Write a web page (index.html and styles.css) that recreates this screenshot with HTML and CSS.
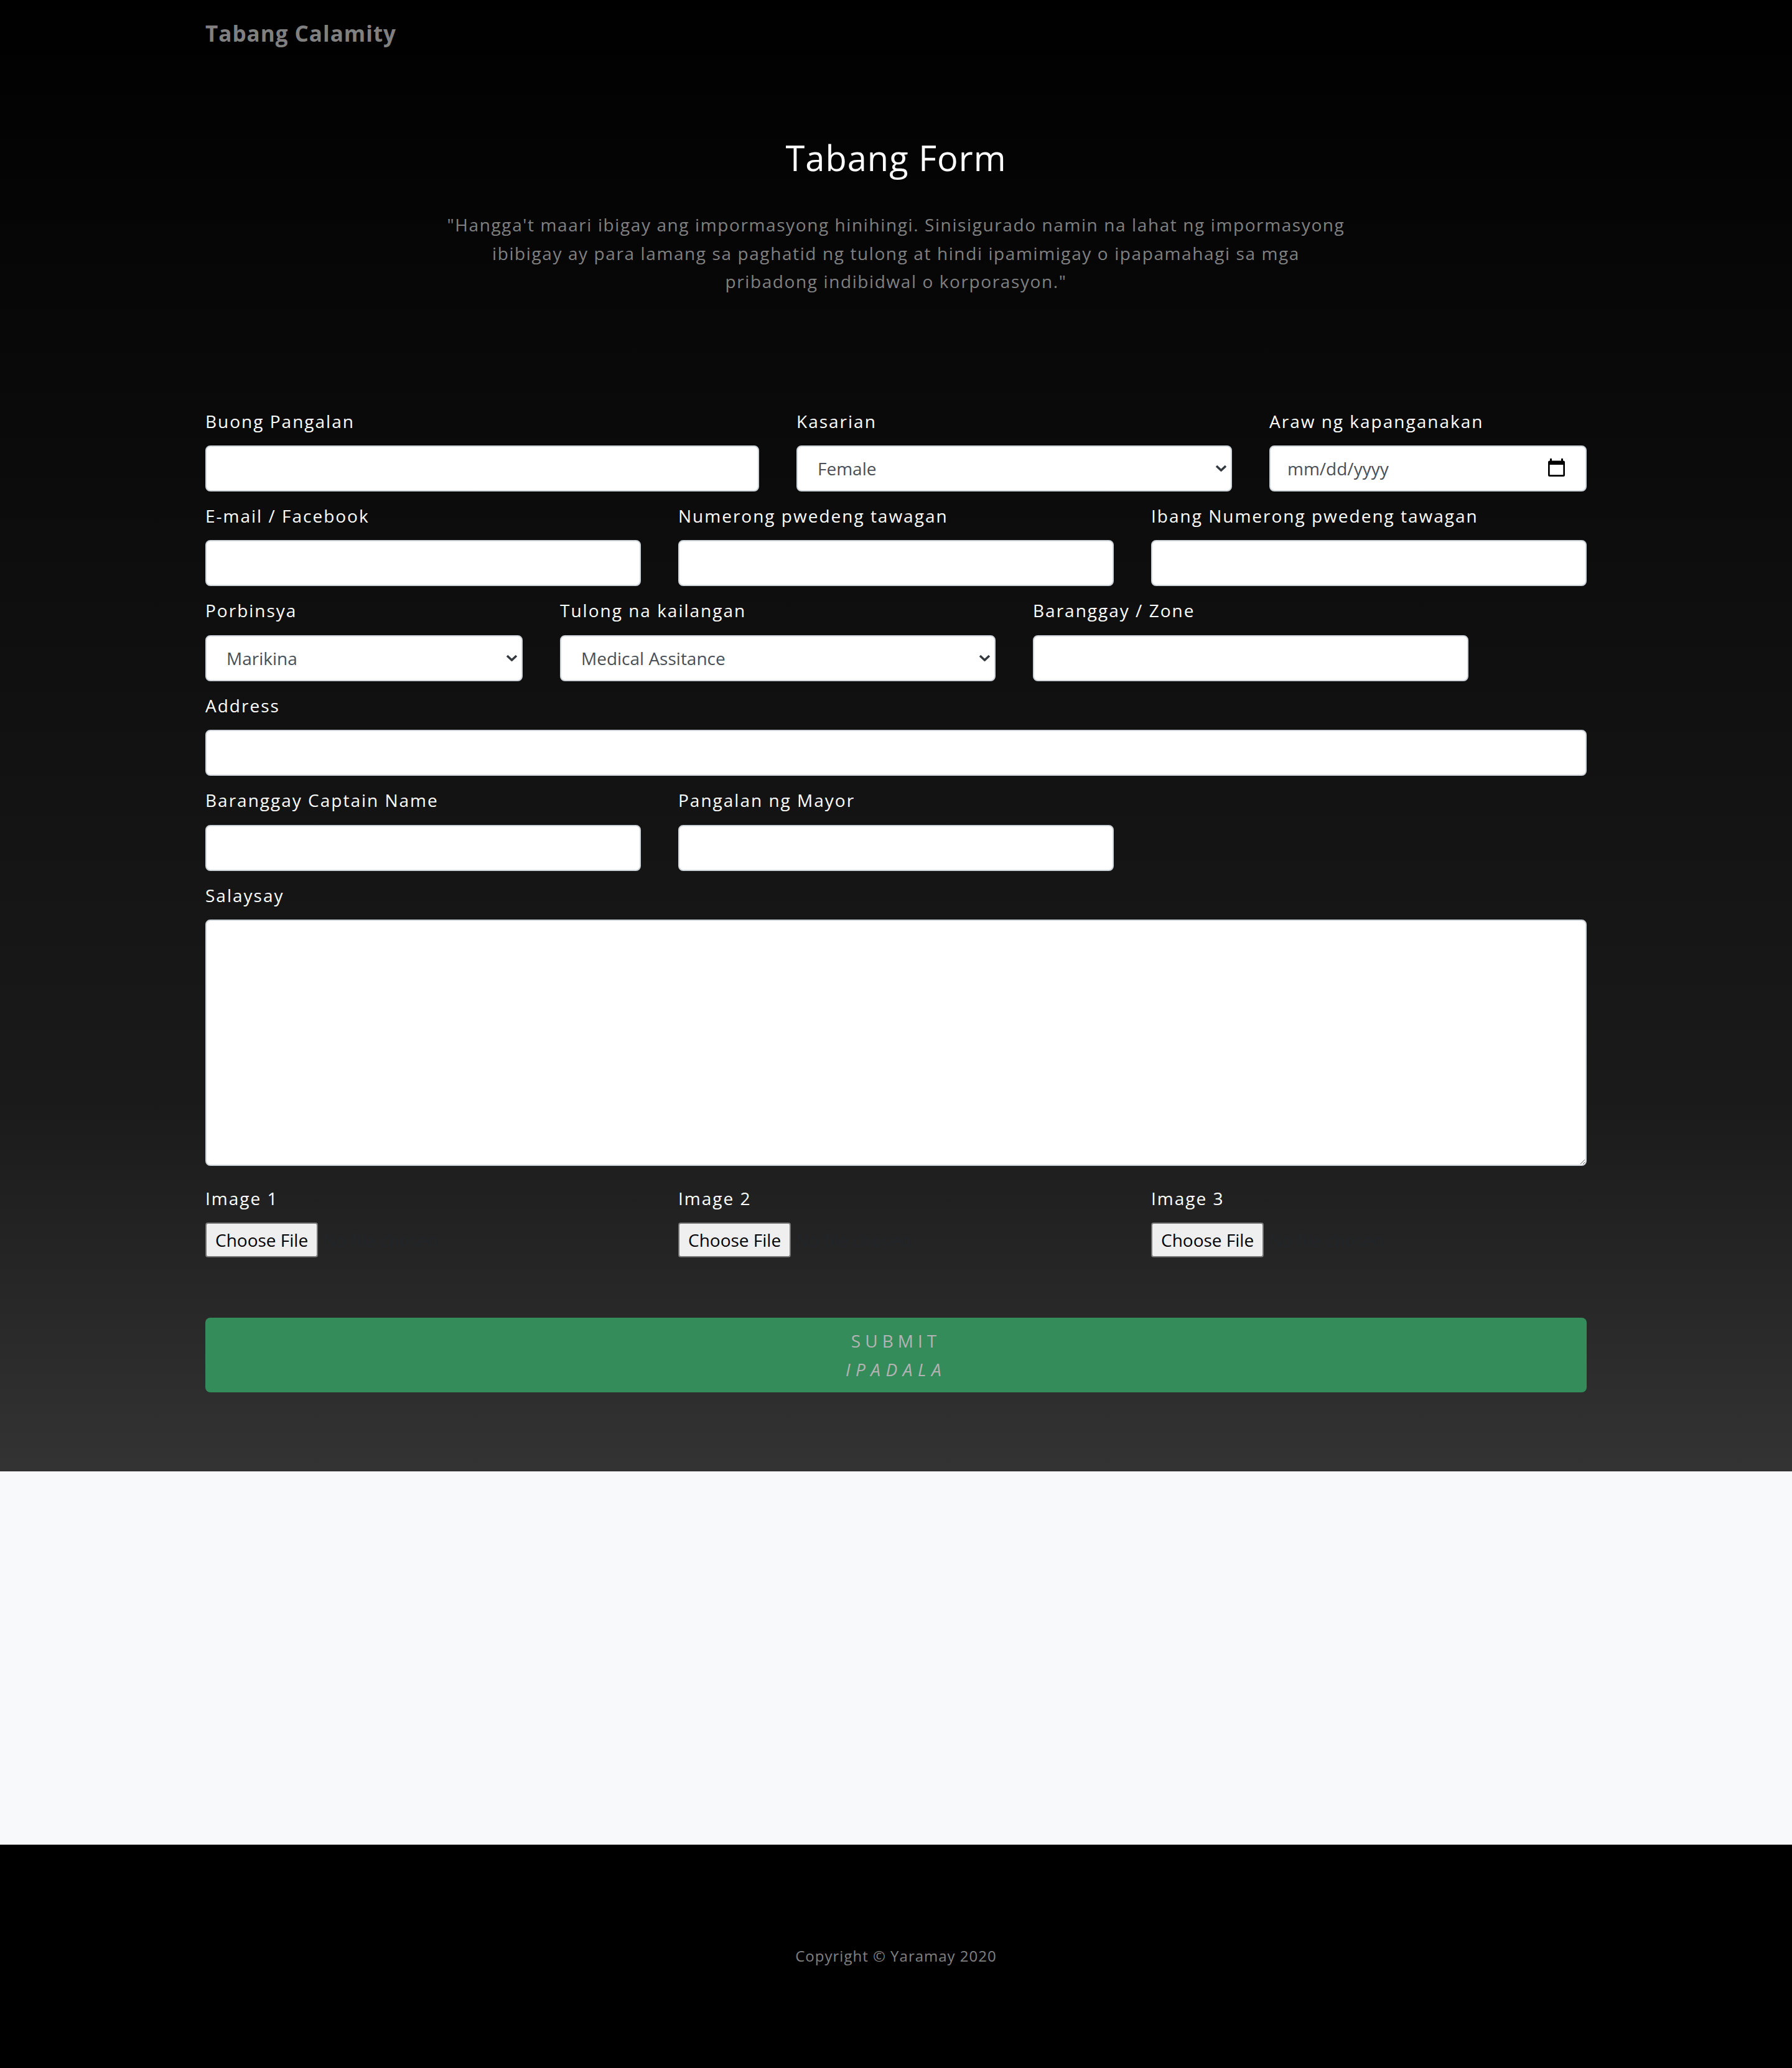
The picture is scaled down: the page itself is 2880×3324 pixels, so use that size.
FILE: index.html
```html
<!DOCTYPE html>
<html lang="tl">
<head>
<meta charset="utf-8">
<title>Tabang Calamity</title>
<link rel="stylesheet" href="styles.css">
</head>
<body>
<div class="hero">
  <nav class="navbar">
    <div class="container">
      <a class="brand" href="#">Tabang Calamity</a>
    </div>
  </nav>
  <header class="intro">
    <div class="container">
      <h2 class="title">Tabang Form</h2>
      <p class="lead">"Hangga't maari ibigay ang impormasyong hinihingi. Sinisigurado namin na lahat ng impormasyong<br>ibibigay ay para lamang sa paghatid ng tulong at hindi ipamimigay o ipapamahagi sa mga<br>pribadong indibidwal o korporasyon."</p>
    </div>
  </header>
  <section class="form-section">
    <div class="container">
      <form class="form-grid">
        <div class="field span-5">
          <label class="label" for="f-name">Buong Pangalan</label>
          <input class="control" id="f-name" type="text">
        </div>
        <div class="field span-4">
          <label class="label" for="f-sex">Kasarian</label>
          <div class="select-wrap">
            <select class="control select" id="f-sex"><option>Female</option><option>Male</option></select>
            <svg class="chevron" width="19" height="11" viewBox="0 0 19 11"><path d="M2 2 L9.5 9 L17 2" fill="none" stroke="#343a40" stroke-width="3.6"/></svg>
          </div>
        </div>
        <div class="field span-3">
          <label class="label" for="f-bday">Araw ng kapanganakan</label>
          <div class="date-wrap">
            <input class="control date" id="f-bday" type="text" placeholder="mm/dd/yyyy">
            <svg class="calendar" width="27" height="29" viewBox="0 0 27 29"><rect x="3" y="0" width="3" height="5" fill="#000"/><rect x="21" y="0" width="3" height="5" fill="#000"/><path fill="#000" fill-rule="evenodd" d="M2.5 3.5 H24.5 A2.5 2.5 0 0 1 27 6 V26.5 A2.5 2.5 0 0 1 24.5 29 H2.5 A2.5 2.5 0 0 1 0 26.5 V6 A2.5 2.5 0 0 1 2.5 3.5 Z M2.7 10 V26.3 H24.3 V10 Z"/></svg>
          </div>
        </div>

        <div class="field span-4">
          <label class="label" for="f-mail">E-mail / Facebook</label>
          <input class="control" id="f-mail" type="text">
        </div>
        <div class="field span-4">
          <label class="label" for="f-num">Numerong pwedeng tawagan</label>
          <input class="control" id="f-num" type="text">
        </div>
        <div class="field span-4">
          <label class="label" for="f-num2">Ibang Numerong pwedeng tawagan</label>
          <input class="control" id="f-num2" type="text">
        </div>

        <div class="field span-3">
          <label class="label" for="f-prov">Porbinsya</label>
          <div class="select-wrap">
            <select class="control select" id="f-prov"><option>Marikina</option></select>
            <svg class="chevron" width="19" height="11" viewBox="0 0 19 11"><path d="M2 2 L9.5 9 L17 2" fill="none" stroke="#343a40" stroke-width="3.6"/></svg>
          </div>
        </div>
        <div class="field span-4">
          <label class="label" for="f-help">Tulong na kailangan</label>
          <div class="select-wrap">
            <select class="control select" id="f-help"><option>Medical Assitance</option></select>
            <svg class="chevron" width="19" height="11" viewBox="0 0 19 11"><path d="M2 2 L9.5 9 L17 2" fill="none" stroke="#343a40" stroke-width="3.6"/></svg>
          </div>
        </div>
        <div class="field span-4">
          <label class="label" for="f-brgy">Baranggay / Zone</label>
          <input class="control" id="f-brgy" type="text">
        </div>

        <div class="field span-12">
          <label class="label" for="f-addr">Address</label>
          <input class="control" id="f-addr" type="text">
        </div>

        <div class="field span-4">
          <label class="label" for="f-capt">Baranggay Captain Name</label>
          <input class="control" id="f-capt" type="text">
        </div>
        <div class="field span-4">
          <label class="label" for="f-mayor">Pangalan ng Mayor</label>
          <input class="control" id="f-mayor" type="text">
        </div>

        <div class="field span-12 field-story">
          <label class="label" for="f-story">Salaysay</label>
          <textarea class="control textarea" id="f-story"></textarea>
        </div>

        <div class="field span-4">
          <label class="label" for="f-img1">Image 1</label>
          <input class="file" id="f-img1" type="file">
        </div>
        <div class="field span-4">
          <label class="label" for="f-img2">Image 2</label>
          <input class="file" id="f-img2" type="file">
        </div>
        <div class="field span-4">
          <label class="label" for="f-img3">Image 3</label>
          <input class="file" id="f-img3" type="file">
        </div>
      </form>
      <button class="submit" type="button">Submit<br><em class="submit-alt">Ipadala</em></button>
    </div>
  </section>
</div>
<section class="blank"></section>
<footer class="footer">
  <div class="container">Copyright © Yaramay 2020</div>
</footer>
</body>
</html>
```

FILE: styles.css
```css
* {
  box-sizing: border-box;
}

body {
  margin: 0;
  font-family: "Open Sans", "Noto Sans", sans-serif;
  letter-spacing: 0.0625em;
  color: #212529;
  background: #f8f9fa;
}

.container {
  width: 2220px;
  margin: 0 auto;
}

.hero {
  background: linear-gradient(to bottom, #000 0%, #1a1a1a 75%, #333 100%);
}

.navbar {
  padding: 27px 0;
}

.brand {
  display: inline-block;
  font-size: 35px;
  line-height: 54px;
  font-weight: 700;
  color: #808080;
  text-decoration: none;
}

.intro {
  padding-top: 112px;
  text-align: center;
}

.title {
  margin: 0;
  font-size: 56px;
  line-height: 67px;
  font-weight: 400;
  color: #fff;
}

.lead {
  width: 1560px;
  margin: 52px auto 0;
  font-size: 28px;
  line-height: 45.5px;
  letter-spacing: 1.6px;
  color: #808080;
}

.form-section {
  padding-top: 182px;
  padding-bottom: 127px;
}

.form-grid {
  display: grid;
  grid-template-columns: repeat(12, 1fr);
  column-gap: 60px;
  row-gap: 20px;
}

.span-3 { grid-column: span 3; }
.span-4 { grid-column: span 4; }
.span-5 { grid-column: span 5; }
.span-12 { grid-column: span 12; }

.field-story {
  margin-bottom: 13px;
}

.label {
  display: block;
  margin-bottom: 20px;
  font-size: 28px;
  line-height: 38.4px;
  letter-spacing: 2px;
  color: #fff;
}

.control {
  display: block;
  width: 100%;
  height: 74px;
  padding: 0 24px;
  font-family: inherit;
  font-size: 28px;
  letter-spacing: normal;
  color: #495057;
  background: #fff;
  border: 2px solid #ced4da;
  border-radius: 8px;
  outline: none;
}

.control::placeholder {
  color: #495057;
  opacity: 1;
}

.select-wrap,
.date-wrap {
  position: relative;
}

.select {
  appearance: none;
  -webkit-appearance: none;
  padding-left: 32px;
  padding-right: 40px;
}

.chevron {
  position: absolute;
  right: 8px;
  top: 31px;
  pointer-events: none;
}

.date {
  padding-left: 27px;
}

.calendar {
  position: absolute;
  right: 35px;
  top: 21px;
  pointer-events: none;
}

.textarea {
  height: 396px;
  padding: 12px 24px;
  resize: vertical;
}

.file {
  display: block;
  margin-top: 4px;
  font-family: inherit;
  font-size: 28px;
  letter-spacing: normal;
  color: #212529;
}

.file::file-selector-button {
  height: 56px;
  margin-right: 8px;
  padding: 0 14px;
  font-family: inherit;
  font-size: 28px;
  color: #000;
  background: #efefef;
  border: 2px solid #767676;
  border-radius: 4px;
}

.submit {
  display: block;
  width: 100%;
  margin-top: 97px;
  padding: 14px 0;
  font-family: inherit;
  font-size: 28px;
  line-height: 46px;
  letter-spacing: 7px;
  text-transform: uppercase;
  color: #b3b3b3;
  background: #358c5b;
  border: 0;
  border-radius: 8px;
}

.submit-alt {
  letter-spacing: 8.5px;
}

.blank {
  height: 600px;
  background: #f8f9fa;
}

.footer {
  padding: 160px 0;
  background: #000;
  color: #808080;
  text-align: center;
  font-size: 24px;
  line-height: 38.4px;
}
```
